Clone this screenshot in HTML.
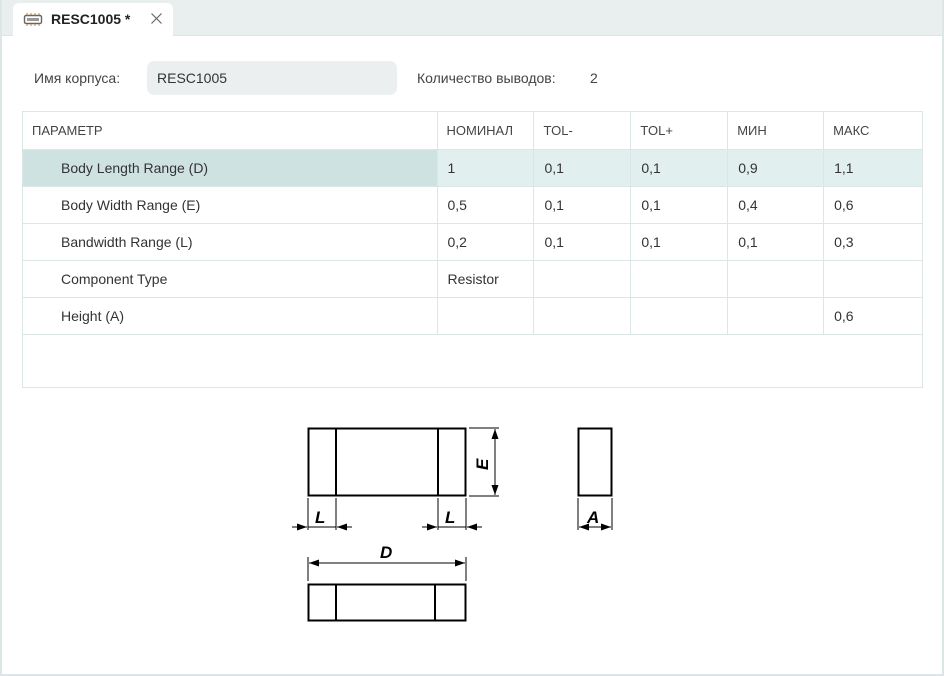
<!DOCTYPE html>
<html><head><meta charset="utf-8"><style>
*{margin:0;padding:0;box-sizing:border-box}
body{width:944px;height:676px;background:#fff;font-family:"Liberation Sans",sans-serif;color:#333;position:relative;overflow:hidden;font-size:14px}
.frame{position:absolute;left:0;top:0;width:944px;height:676px;border:2px solid #dde6e6;border-top:none}
.bar{position:absolute;left:0;top:0;width:944px;height:36px;background:#e9eeee;border-bottom:1px solid #dde5e5}
.tab{position:absolute;left:13px;top:3px;width:160px;height:34px;background:#fff;border-radius:6px 6px 0 0}
.tab .t{position:absolute;left:38px;top:8px;font-weight:bold;font-size:14px;color:#222}
.abs{position:absolute;white-space:nowrap}
.inp{position:absolute;left:147px;top:61px;width:250px;height:34px;background:#ebefef;border-radius:7px}
table{position:absolute;left:22px;top:111px;border-collapse:collapse;width:901px}
td{border:1px solid #dce6e6;height:37px;padding:0 0 0 10px;font-size:14px;color:#333;white-space:nowrap}
tr.h td{font-size:13px;color:#444;height:38px;padding-left:9px}
td.p{padding-left:38px}
tr.s td{background:#e2efef}
tr.s td.p{background:#cfe2e2}
</style></head><body>
<div class="bar"></div>
<div class="tab">
<svg style="position:absolute;left:10px;top:10px" width="20" height="13" viewBox="0 0 20 13"><rect x="1.5" y="2.5" width="17" height="8" rx="1.5" fill="#fff" stroke="#666" stroke-width="1.4"/><rect x="4" y="5" width="12" height="3" fill="#999"/><g stroke="#c8862e" stroke-width="1"><line x1="4" y1="0" x2="4" y2="2"/><line x1="8" y1="0" x2="8" y2="2"/><line x1="12" y1="0" x2="12" y2="2"/><line x1="16" y1="0" x2="16" y2="2"/><line x1="4" y1="11" x2="4" y2="13"/><line x1="8" y1="11" x2="8" y2="13"/><line x1="12" y1="11" x2="12" y2="13"/><line x1="16" y1="11" x2="16" y2="13"/></g></svg>
<div class="t">RESC1005 *</div>
<svg style="position:absolute;left:138px;top:10px" width="11" height="11" viewBox="0 0 11 11"><path d="M0.5 0.5L10.5 10.5M10.5 0.5L0.5 10.5" stroke="#666" stroke-width="1.2"/></svg>
</div>
<div class="frame"></div>
<div class="abs" style="left:34px;top:70px;color:#444">Имя корпуса:</div>
<div class="inp"></div>
<div class="abs" style="left:157px;top:70px;color:#333">RESC1005</div>
<div class="abs" style="left:417px;top:70px;color:#444">Количество выводов:</div>
<div class="abs" style="left:590px;top:70px;color:#444">2</div>
<table>
<colgroup><col style="width:415px"><col style="width:97px"><col style="width:97px"><col style="width:97px"><col style="width:96px"><col style="width:99px"></colgroup>
<tr class="h"><td>ПАРАМЕТР</td><td>НОМИНАЛ</td><td>TOL-</td><td>TOL+</td><td>МИН</td><td>МАКС</td></tr>
<tr class="s"><td class="p">Body Length Range (D)</td><td>1</td><td>0,1</td><td>0,1</td><td>0,9</td><td>1,1</td></tr>
<tr><td class="p">Body Width Range (E)</td><td>0,5</td><td>0,1</td><td>0,1</td><td>0,4</td><td>0,6</td></tr>
<tr><td class="p">Bandwidth Range (L)</td><td>0,2</td><td>0,1</td><td>0,1</td><td>0,1</td><td>0,3</td></tr>
<tr><td class="p">Component Type</td><td>Resistor</td><td></td><td></td><td></td><td></td></tr>
<tr><td class="p">Height (A)</td><td></td><td></td><td></td><td></td><td>0,6</td></tr>
<tr><td colspan="6" style="height:53px"></td></tr>
</table>
<svg class="abs" style="left:0;top:0" width="944" height="676" viewBox="0 0 944 676">
<defs><marker id="a" markerUnits="userSpaceOnUse" markerWidth="10" markerHeight="7" refX="10" refY="3.5" orient="auto"><path d="M0,0 L10,3.5 L0,7z" fill="#000"/></marker></defs>
<g fill="none" stroke="#000">
<rect x="308.5" y="428.5" width="157" height="67" stroke-width="2"/>
<line x1="336" y1="428" x2="336" y2="496" stroke-width="2"/>
<line x1="438" y1="428" x2="438" y2="496" stroke-width="2"/>
<rect x="578.5" y="428.5" width="33" height="67" stroke-width="2"/>
<rect x="308.5" y="584.5" width="157" height="36" stroke-width="2"/>
<line x1="336" y1="584" x2="336" y2="621" stroke-width="2"/>
<line x1="435" y1="584" x2="435" y2="621" stroke-width="2"/>
<g stroke-width="1">
<line x1="469" y1="428" x2="499" y2="428"/><line x1="469" y1="496" x2="499" y2="496"/>
<line x1="495" y1="462" x2="495" y2="429" marker-end="url(#a)"/><line x1="495" y1="462" x2="495" y2="495" marker-end="url(#a)"/>
<line x1="308" y1="498" x2="308" y2="530"/><line x1="336" y1="498" x2="336" y2="530"/>
<line x1="438" y1="498" x2="438" y2="530"/><line x1="466" y1="498" x2="466" y2="530"/>
<line x1="292" y1="527" x2="307" y2="527" marker-end="url(#a)"/><line x1="352" y1="527" x2="337" y2="527" marker-end="url(#a)"/>
<line x1="308" y1="527" x2="336" y2="527"/><line x1="438" y1="527" x2="466" y2="527"/>
<line x1="422" y1="527" x2="437" y2="527" marker-end="url(#a)"/><line x1="482" y1="527" x2="467" y2="527" marker-end="url(#a)"/>
<line x1="578" y1="498" x2="578" y2="530"/><line x1="612" y1="498" x2="612" y2="530"/>
<line x1="595" y1="527" x2="579" y2="527" marker-end="url(#a)"/><line x1="595" y1="527" x2="611" y2="527" marker-end="url(#a)"/>
<line x1="308" y1="557" x2="308" y2="581"/><line x1="466" y1="557" x2="466" y2="581"/>
<line x1="387" y1="563" x2="309" y2="563" marker-end="url(#a)"/><line x1="387" y1="563" x2="465" y2="563" marker-end="url(#a)"/>
</g></g>
<g font-family="Liberation Sans,sans-serif" font-weight="bold" font-style="italic" font-size="17" fill="#000">
<text x="315" y="523">L</text><text x="445" y="523">L</text><text x="587" y="523">A</text><text x="380" y="558">D</text>
<text transform="translate(488,470) rotate(-90)">E</text>
</g></svg>
</body></html>
